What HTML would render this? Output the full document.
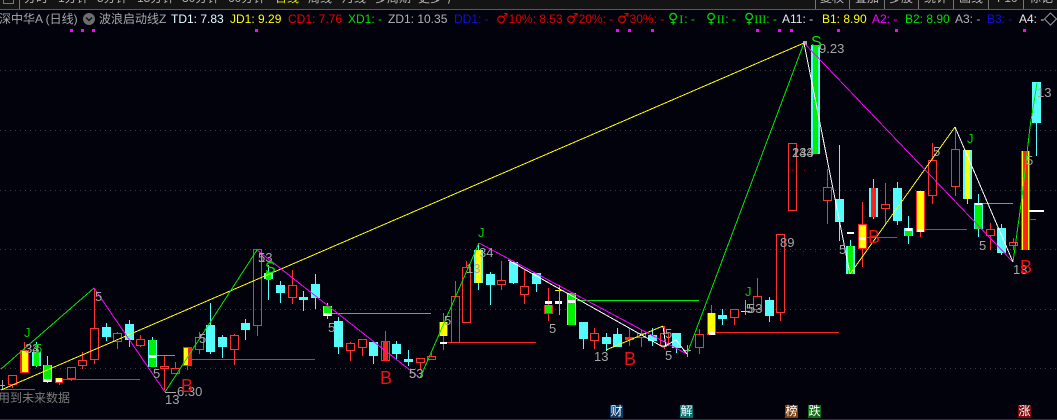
<!DOCTYPE html>
<html><head><meta charset="utf-8"><style>
html,body{margin:0;padding:0;background:#02020c}
#p{position:relative;width:1057px;height:420px;overflow:hidden;background:#02020c;font-family:"Liberation Sans","Noto Sans CJK SC",sans-serif;font-size:12px;line-height:14px}
#p span{position:absolute;white-space:nowrap}
.n{top:-9px;color:#b4b4b4}
.h{top:12px}
.h b{font:normal 14px/14px "DejaVu Sans",sans-serif}
.h i{font:normal 12px/14px "Liberation Serif",serif;display:inline-block;text-align:center}
svg{position:absolute;left:0;top:0}
svg text{font-family:"Liberation Sans","Noto Sans CJK SC",sans-serif}
.t{width:13px;height:13px;top:405px;color:#fff;text-align:center;line-height:13px}
</style></head><body><div id="p">
<svg width="1057" height="420" viewBox="0 0 1057 420">
<rect width="1057" height="9" fill="#141414"/><rect y="9" width="1057" height="1" fill="#5a5a5a"/>
<path d="M3.500-2v5.500h10V-2M19.500 0v9M815.500 0v9M849.500 0v9M884.500 0v9M918.500 0v9M953.500 0v9M988.500 0v9M1023.500 0v9" stroke="#777" fill="none"/>
<g stroke="#3c3c3c" stroke-dasharray="1 4"><path d="M0 70.500H1057M0 130.500H1057M0 190.500H1057M0 249.500H1057M0 309.500H1057M0 368.500H1057"/></g>
<rect y="419" width="1057" height="1" fill="#333"/>
<g fill="#f0f"><rect x="70" y="29" width="3" height="3"/><rect x="81" y="29" width="3" height="3"/><rect x="92" y="29" width="3" height="3"/><rect x="255" y="29" width="3" height="3"/><rect x="616" y="29" width="3" height="3"/><rect x="628" y="29" width="3" height="3"/><rect x="651" y="29" width="3" height="3"/><rect x="756" y="29" width="3" height="3"/><rect x="778" y="29" width="3" height="3"/><rect x="790" y="29" width="3" height="3"/><rect x="837" y="29" width="3" height="3"/><rect x="895" y="29" width="3" height="3"/><rect x="1023" y="29" width="3" height="3"/></g>
<circle cx="89" cy="19" r="6" fill="#6e6e6e"/><path d="M86 17.500l3 3 3-3" stroke="#111" stroke-width="1.500" fill="none"/>
<path d="M1050.500 13l6 6-6 6-6-6z" stroke="#999" fill="none"/>
<!-- horizontal levels -->
<g stroke-width="1" fill="none" shape-rendering="crispEdges">
<path stroke="#ff2020" d="M0 389.500H35M63 379.500H140M192 359.500H315M447 342.500H536M716 332.500H839M867 237.500H897M925 229.500H967M1029 219.500H1036"/>
<path stroke="#00f000" d="M157 355.500H175M332 313.500H431M577 300.500H699M983 203.500H1013"/>
</g>
<!-- cyan wicks -->
<path stroke="#54fcfc" fill="none" d="M36.500 342V367M47.500 356V383M106.500 323V341M129.500 320V347M152.500 337V367M210.500 303V354M222.500 335V358M245.500 319V340M268.500 265V300M280.500 281V303M303.500 291V311M315.500 274V309M327.500 303V319M338.500 317V354M373.500 342V364M396.500 341V359M408.500 350V366M478.500 243V290M490.500 272V305M513.500 262V284M536.500 273V292M583.500 322V349M606.500 333V351M617.500 328V347M652.500 328V346M676.500 333V353M722.500 309V325M769.500 297V322M839.500 145V241M850.500 240V274M873.500 179V219M897.500 182V225M908.500 216V244M967.500 150V204M978.500 194V237M1001.500 224V255M1036.500 82V156"/>
<!-- cyan bodies -->
<g fill="#54fcfc"><rect x="32" y="352" width="9" height="14"/><rect x="43" y="365" width="9" height="17"/><rect x="102" y="327" width="9" height="10"/><rect x="125" y="324" width="9" height="16"/><rect x="148" y="340" width="9" height="27"/><rect x="206" y="325" width="9" height="27"/><rect x="218" y="337" width="9" height="10"/><rect x="241" y="323" width="9" height="7"/><rect x="264" y="273" width="9" height="6"/><rect x="276" y="285" width="9" height="8"/><rect x="299" y="297" width="9" height="3"/><rect x="311" y="284" width="9" height="14"/><rect x="323" y="306" width="9" height="10"/><rect x="334" y="321" width="9" height="26"/><rect x="369" y="342" width="9" height="14"/><rect x="392" y="344" width="9" height="10"/><rect x="404" y="359" width="9" height="3"/><rect x="474" y="250" width="9" height="33"/><rect x="486" y="274" width="9" height="11"/><rect x="509" y="262" width="9" height="21"/><rect x="532" y="273" width="9" height="11"/><rect x="567" y="293" width="9" height="32"/><rect x="579" y="322" width="9" height="17"/><rect x="602" y="337" width="9" height="7"/><rect x="613" y="334" width="9" height="13"/><rect x="648" y="335" width="9" height="6"/><rect x="672" y="333" width="9" height="15"/><rect x="718" y="315" width="9" height="4"/><rect x="765" y="300" width="9" height="16"/><rect x="811" y="45" width="9" height="109"/><rect x="835" y="199" width="9" height="23"/><rect x="846" y="246" width="9" height="28"/><rect x="869" y="188" width="9" height="29"/><rect x="893" y="188" width="9" height="33"/><rect x="904" y="228" width="9" height="8"/><rect x="963" y="150" width="9" height="49"/><rect x="974" y="203" width="9" height="26"/><rect x="997" y="228" width="9" height="25"/><rect x="1032" y="82" width="9" height="41"/></g>
<!-- red hollow -->
<path stroke="#ff3232" fill="none" d="M8.500 375.500h8v9h-8zM12.500 384v4M67.500 367.500h8v11h-8zM71.500 378v3M78.500 360.500h8v5h-8zM82.500 352v8M82.500 365v4M90.500 328.500h8v31h-8zM94.500 288v40M94.500 359v5M113.500 333.500h8v8h-8zM117.500 332v1M117.500 341v8M136.500 339.500h8v6h-8zM140.500 335v4M140.500 345v2M160.500 366.500h8v2h-8zM164.500 356v10M164.500 368v22M171.500 368.500h8v5h-8zM175.500 362v6M195.500 337.500h8v12h-8zM199.500 332v5M199.500 349v5M230.500 335.500h8v14h-8zM234.500 334v1M234.500 349v16M253.500 249.500h8v76h-8zM257.500 325v11M288.500 285.500h8v12h-8zM292.500 270v15M292.500 297v7M346.500 343.500h8v7h-8zM350.500 342v1M350.500 350v11M358.500 339.500h8v8h-8zM362.500 347v9M416.500 358.500h8v4h-8zM420.500 362v8M427.500 356.500h8v3h-8zM431.500 353v3M451.500 296.500h8v46h-8zM455.500 281v15M462.500 267.500h8v55h-8zM466.500 261v6M497.500 280.500h8v4h-8zM501.500 261v19M501.500 284v6M520.500 286.500h8v8h-8zM524.500 269v17M524.500 294v10M590.500 333.500h8v7h-8zM594.500 328v5M594.500 340v9M637.500 333.500h8v4h-8zM641.500 330v3M641.500 337v10M660.500 333.500h8v12h-8zM664.500 326v7M664.500 345v4M695.500 334.500h8v13h-8zM699.500 329v5M699.500 347v7M730.500 309.500h8v8h-8zM734.500 317v8M753.500 296.500h8v13h-8zM757.500 278v18M776.500 234.500h8v78h-8zM780.500 312v9M788.500 143.500h8v67h-8zM792.500 210v1M823.500 187.500h8v13h-8zM827.500 169v18M827.500 200v24M881.500 204.500h8v4h-8zM885.500 183v21M885.500 208v17M928.500 160.500h8v35h-8zM932.500 143v17M932.500 195v9M951.500 149.500h8v37h-8zM955.500 127v22M955.500 186v10M986.500 229.500h8v6h-8zM990.500 223v6M990.500 235v15M1009.500 242.500h8v3h-8zM1013.500 238v4M1013.500 245v5M381.500 341.500h8v19h-8zM385.500 331v10M625.500 337.500h8v2h-8zM629.500 328v18M24.500 342v8M59.500 382v3M187.500 366v4M711.500 305v8M862.500 202v22M862.500 249v18M920.500 232v5M443.500 313v37M548.500 288v17M548.500 313v8"/>
<g fill="#ff2020"><rect x="383" y="341" width="5" height="20"/><rect x="626" y="337" width="7" height="3"/><rect x="871" y="188" width="5" height="29"/><rect x="20" y="350" width="9" height="23"/><rect x="183" y="347" width="9" height="19"/><rect x="544" y="305" width="9" height="9"/><rect x="55" y="378" width="8" height="5"/><rect x="858" y="224" width="9" height="25"/><rect x="916" y="191" width="9" height="41"/><rect x="707" y="313" width="9" height="22"/><rect x="439" y="322" width="9" height="14"/><rect x="1021" y="151" width="9" height="99"/></g>
<!-- yellow fills -->
<g fill="#ff0"><rect x="476" y="250" width="5" height="33"/><rect x="965" y="150" width="5" height="49"/><rect x="22" y="351" width="6" height="21"/><rect x="184" y="348" width="4" height="17"/><rect x="56" y="378" width="6" height="1"/><rect x="708" y="313" width="7" height="21"/><rect x="859" y="225" width="7" height="23"/><rect x="917" y="191" width="7" height="40"/><rect x="440" y="322" width="7" height="14"/><rect x="1022" y="151" width="1" height="99"/><rect x="1028" y="151" width="1" height="99"/><rect x="555" y="290" width="7" height="1"/><rect x="741" y="311" width="9" height="1"/></g>
<!-- green fills -->
<g fill="#00f000"><rect x="34" y="352" width="5" height="14"/><rect x="44" y="365" width="7" height="14"/><rect x="149" y="340" width="7" height="27"/><rect x="266" y="272" width="5" height="8"/><rect x="324" y="306" width="7" height="7"/><rect x="568" y="293" width="7" height="32"/><rect x="545" y="305" width="7" height="8"/><rect x="813" y="45" width="5" height="109"/><rect x="848" y="246" width="5" height="28"/><rect x="905" y="231" width="7" height="5"/><rect x="975" y="203" width="7" height="26"/></g>
<!-- white -->
<g fill="#fff"><rect x="44" y="379" width="7" height="3"/><rect x="149" y="355" width="7" height="3"/><rect x="324" y="313" width="7" height="3"/><rect x="568" y="300" width="7" height="3"/><rect x="545" y="301" width="7" height="3"/><rect x="555" y="301" width="7" height="3"/><rect x="56" y="379" width="6" height="3"/><rect x="709" y="332" width="6" height="3"/><rect x="859" y="237" width="7" height="3"/><rect x="917" y="229" width="7" height="3"/><rect x="440" y="342" width="7" height="2"/><rect x="905" y="228" width="7" height="3"/><rect x="975" y="203" width="7" height="2"/><rect x="847" y="232" width="7" height="2"/><rect x="1029" y="210" width="15" height="2"/></g>
<path stroke="#aaa" fill="none" d="M559.500 285V315M745.500 300V315M687.500 345V357M683 350.500H691M2.500 380V390M0 385.500H5M165 392.500H176"/>
<rect x="803" y="41" width="4" height="4" fill="#aaa"/>
<g fill="#a00"><rect x="780" y="251" width="1" height="1"/><rect x="792" y="251" width="1" height="1"/><rect x="803" y="251" width="1" height="1"/><rect x="815" y="251" width="1" height="1"/><rect x="827" y="251" width="1" height="1"/><rect x="792" y="170" width="1" height="1"/><rect x="804" y="170" width="1" height="1"/><rect x="815" y="170" width="1" height="1"/><rect x="804" y="89" width="1" height="1"/></g>
<!-- wave lines -->
<g fill="none" shape-rendering="crispEdges">
<path stroke="#ff0" stroke-width="1" d="M1 390L804 43M850 274L955 127M606 350L663 326"/>
<path stroke="#00e800" stroke-width="1" d="M1 369L94 288M165 392L257 250M420 378L479 243M687 354L804 43M1013 262L1022 197L1030 127L1037 83"/>
<path stroke="#f0f" stroke-width="1" d="M94 288L165 392M257 250L420 378M479 243L687 354M804 43L1013 262"/>
<path stroke="#fff" stroke-width="1" d="M508 260L663 347L676 340L687 354M804 43L850 274M955 127L1013 262M663 326L666 347"/>
</g>
<!-- labels -->
<g fill="#a6a6a6" font-size="13">
<text x="25" y="353">33</text><text x="25" y="353">34</text><text x="95" y="301">5</text><text x="153" y="378">5</text><text x="165" y="404">13</text><text x="177" y="396">6.30</text><text x="199" y="343">5</text>
<text x="258" y="262">5</text><text x="258" y="262">13</text><text x="328" y="332">5</text><text x="409" y="378">5</text><text x="409" y="378">53</text>
<text x="479" y="257">34</text><text x="466" y="273">13</text><text x="444" y="325">5</text><text x="549" y="333">5</text><text x="594" y="361">13</text><text x="665" y="338">5</text><text x="665" y="360">5</text>
<text x="746" y="313">5</text><text x="748" y="313">53</text><text x="780" y="247">89</text><text x="839" y="254">5</text><text x="819" y="53">9.23</text><text x="792" y="157">233</text><text x="792" y="157">144</text>
<text x="933" y="156">5</text><text x="979" y="250">5</text><text x="1013" y="274">13</text><text x="1026" y="165">5</text><text x="1037" y="97">13</text>
</g>
<g fill="#00d000" font-size="13"><text x="24" y="337">J</text><text x="35" y="353">5</text><text x="478" y="237">J</text><text x="745" y="296">J</text><text x="967" y="143">J</text></g>
<g fill="#00e000" font-size="16"><text x="265" y="273">S</text><text x="811" y="47">S</text></g>
<g fill="#f01010" font-size="18"><text x="181" y="392">B</text><text x="380" y="384">B</text><text x="624" y="365">B</text><text x="868" y="243">B</text><text x="1020" y="273">B</text></g>
</svg>
<span class="n" style="left:24px">分时</span><span class="n" style="left:58px">1分钟</span><span class="n" style="left:97px">5分钟</span><span class="n" style="left:137px">15分钟</span><span class="n" style="left:182px">30分钟</span><span class="n" style="left:228px">60分钟</span><span class="n" style="left:275px;color:#e0e000">日线</span><span class="n" style="left:308px">周线</span><span class="n" style="left:342px">月线</span><span class="n" style="left:375px">多周期</span><span class="n" style="left:418px">更多</span><span class="n" style="left:447px">⟩</span>
<span class="n" style="left:820px">复权</span><span class="n" style="left:855px">叠加</span><span class="n" style="left:889px">多股</span><span class="n" style="left:924px">统计</span><span class="n" style="left:959px">画线</span><span class="n" style="left:997px">F10</span><span class="n" style="left:1029px">标记</span>
<span class="h" style="left:-1px;color:#a8a8a8">深中华A (日线)</span>
<span class="h" style="left:99px;color:#a8a8a8">波浪启动线Z</span>
<span class="h" style="left:171px;color:#e8ffff">TD1: 7.83</span>
<span class="h" style="left:230px;color:#ff0">JD1: 9.29</span>
<span class="h" style="left:288px;color:#f00000">CD1: 7.76</span>
<span class="h" style="left:348px;color:#00e000">XD1: -</span>
<span class="h" style="left:388px;color:#b4b4b4">ZD1: 10.35</span>
<span class="h" style="left:454px;color:#1010e0">DD1: -</span>
<span class="h" style="left:496px;color:#e00000"><b>♂</b>10%: 8.53</span>
<span class="h" style="left:566px;color:#e00000"><b>♂</b>20%: -</span>
<span class="h" style="left:617px;color:#e00000"><b>♂</b>30%: -</span>
<span class="h" style="left:668px;color:#00e000"><b>♀</b><i style="width:6px">I</i>: -</span>
<span class="h" style="left:706px;color:#00e000"><b>♀</b><i style="width:9px">II</i>: -</span>
<span class="h" style="left:744px;color:#00e000"><b>♀</b><i style="width:12px">III</i>: -</span>
<span class="h" style="left:782px;color:#e8e8e8">A11: -</span>
<span class="h" style="left:822px;color:#ff0">B1: 8.90</span>
<span class="h" style="left:872px;color:#f0f">A2: -</span>
<span class="h" style="left:905px;color:#00e000">B2: 8.90</span>
<span class="h" style="left:955px;color:#b4b4b4">A3: -</span>
<span class="h" style="left:987px;color:#1010e0">B3: -</span>
<span class="h" style="left:1019px;color:#e8e8e8">A4: -</span>
<span style="left:-2px;top:391px;color:#7c7c7c">用到未来数据</span>
<span class="t" style="left:610px;background:#0a3d6a">财</span>
<span class="t" style="left:680px;background:#0a7070">解</span>
<span class="t" style="left:785px;background:#7a4010">榜</span>
<span class="t" style="left:808px;background:#0a7010">跌</span>
<span class="t" style="left:1018px;background:#800a0a">涨</span>
</div></body></html>
